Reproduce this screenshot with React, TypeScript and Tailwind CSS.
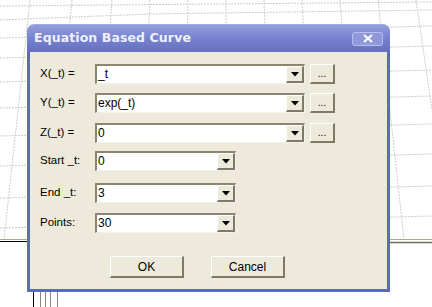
import React from "react";

const sunken =
  "border-t-2 border-l-2 border-b border-r border-t-[#8a866f] border-l-[#8a866f] border-b-[#f4f2e8] border-r-[#f4f2e8]";
const raised =
  "border-t border-l border-b-2 border-r-2 border-t-white border-l-white border-b-[#7d7a68] border-r-[#7d7a68]";

const DropButton = () => (
  <div className={`flex h-full w-[18px] items-center justify-center bg-[#edeadc] ${raised}`}>
    <svg width="8" height="5" viewBox="0 0 8 5">
      <path d="M0 0h8L4 4.5z" fill="#000" />
    </svg>
  </div>
);

const Combo = ({ value, wide }: { value: string; wide?: boolean }) => (
  <div className={`flex h-[20px] ${wide ? "w-[210px]" : "w-[141px]"} bg-white ${sunken}`}>
    <div className="flex-1 pl-[1px] text-[12px] leading-[17px] text-black">{value}</div>
    <DropButton />
  </div>
);

const Dots = () => (
  <div className={`ml-[5px] flex h-[20px] w-[25px] items-end justify-center bg-[#edeadc] pb-[3px] text-[10px] leading-none ${raised}`}>
    ...
  </div>
);

const Row = ({ label, value, wide, cls }: { label: string; value: string; wide?: boolean; cls: string }) => (
  <div className={`flex h-[20px] items-center ${cls}`}>
    <div className="w-[55px] text-[11.5px] text-black">{label}</div>
    <Combo value={value} wide={wide} />
    {wide && <Dots />}
  </div>
);

const Backdrop = () => (
  <svg className="absolute inset-0" width="432" height="307" viewBox="0 0 432 307">
    <g stroke="#cdcdcd" strokeWidth="1" strokeDasharray="2 1" fill="none">
      <path d="M0 6 L432 2" />
      <path d="M0 20 L150 14 L432 10" />
      <path d="M0 38 L432 26" />
      <path d="M0 58 L432 46" />
      <path d="M0 82 L432 70" />
      <path d="M0 108 L432 96" />
      <path d="M0 136 L432 124" />
      <path d="M0 166 L432 154" />
      <path d="M0 198 L432 186" />
      <path d="M0 228 L432 216" />
      <path d="M30 0 L4 240" />
      <path d="M72 0 L50 240" />
      <path d="M112 0 L96 240" />
      <path d="M150 0 L140 240" />
      <path d="M188 0 L184 240" />
      <path d="M226 0 L228 240" />
      <path d="M264 0 L272 240" />
      <path d="M302 0 L316 240" />
      <path d="M340 0 L360 240" />
      <path d="M378 0 L404 240" />
      <path d="M416 0 L432 110" />
    </g>
    <path d="M0 239.5 H432" stroke="#a8a898" />
    <path d="M0 241.5 H30" stroke="#000" />
    <path d="M390 242.5 H432" stroke="#6e6c5c" strokeWidth="1.5" />
    <g stroke="#000">
      <path d="M33.5 292 V307" />
    </g>
    <g stroke="#8a8a80">
      <path d="M40.5 292 V307" />
      <path d="M45.5 292 V307" />
      <path d="M50.5 292 V307" />
      <path d="M57.5 292 V307" />
    </g>
  </svg>
);

export default function App() {
  return (
    <div
      className="relative h-[307px] w-[432px] overflow-hidden bg-white"
      style={{ fontFamily: '"Liberation Sans", Arial, sans-serif' }}
    >
      <Backdrop />

      {/* dialog window */}
      <div className="absolute left-[27px] top-[24px] flex h-[268px] w-[363px] flex-col">
        {/* title bar */}
        <div className="flex h-[28px] items-center justify-between rounded-t-[7px] border-t border-[#a4acde] bg-gradient-to-b from-[#949ede] via-[#7782cf] to-[#6470bf] pl-[7px] pr-[7px]">
          <span
            className="text-[12.5px] font-bold tracking-[0.1px] text-[#eef0ff]"
            style={{ fontFamily: '"DejaVu Sans", Verdana, sans-serif' }}
          >
            Equation Based Curve
          </span>
          <div className="flex h-[14px] w-[31px] items-center justify-center rounded-[3px] border border-[#b8c0ee] bg-[#8f99da]">
            <svg width="10" height="9" viewBox="0 0 10 9">
              <path d="M1 1 L9 8 M9 1 L1 8" stroke="#fff" strokeWidth="2" />
            </svg>
          </div>
        </div>

        {/* body */}
        <div className="flex flex-1 flex-col border-x-[3px] border-b-[3px] border-[#5d6cb8] bg-[#edeadc] pl-[10px] pt-[12px]">
          <Row label="X(_t) =" value="_t" wide cls="" />
          <Row label="Y(_t) =" value="exp(_t)" wide cls="mt-[9px]" />
          <Row label="Z(_t) =" value="0" wide cls="mt-[10px]" />
          <Row label="Start _t:" value="0" cls="mt-[8px]" />
          <Row label="End _t:" value="3" cls="mt-[12px]" />
          <Row label="Points:" value="30" cls="mt-[10px]" />

          <div className="mt-[23px] flex gap-[27px] pl-[70px]">
            <button className={`h-[22px] w-[74px] bg-[#edeadc] text-[12px] text-black ${raised}`}>OK</button>
            <button className={`h-[22px] w-[74px] bg-[#edeadc] text-[12px] text-black ${raised}`}>Cancel</button>
          </div>
        </div>
      </div>
    </div>
  );
}
